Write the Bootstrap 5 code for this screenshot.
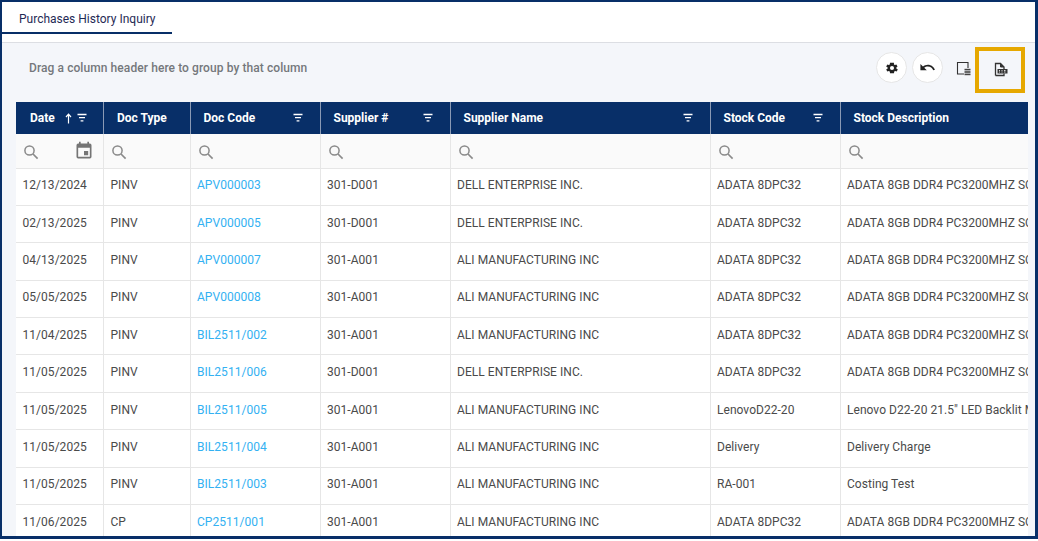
<!DOCTYPE html>
<html lang="en">
<head>
<meta charset="utf-8">
<title>Purchases History Inquiry</title>
<link rel="stylesheet" href="https://cdn.jsdelivr.net/npm/bootstrap@5.3.0/dist/css/bootstrap.min.css">
<style>
html,body{height:100%;overflow:hidden;background:#fff}
body{font-family:Roboto,"Liberation Sans",sans-serif;font-size:12px;color:#333}
.frame{width:1038px;height:539px;border:2px solid #082f68;border-bottom-width:3px;border-right-width:3px;overflow:hidden;background:#f4f6fa}
.tabbar{height:41px;background:#fff;border-bottom:1px solid #dcdee3}
.tabitem{width:170px;height:32px;border-bottom:2px solid #082f68;padding-left:17px;padding-top:10px;font-size:12px;color:#1f2a55;line-height:14px}
.toolarea{height:59px;padding-left:27px;padding-right:10px}
.hint{color:#75787c;font-size:12px;font-weight:500;margin-top:-9px;letter-spacing:.08px}
.toolgroup{margin-top:4px}
.roundbtn{width:31px;height:31px;border:1px solid #e6e6e6;border-radius:50%;background:#fff;padding:0;margin-top:5px;margin-right:5px}
.plainbtn{width:15px;height:15px;padding:0;margin-top:14px;margin-left:8px;margin-right:4px;background:transparent;border:0}
.hilite{width:50px;height:46px;border:4px solid #e6a800;padding-bottom:2px}
.gridwrap{margin-left:14px;width:1012px;overflow:hidden;background:#fff}
.datagrid{table-layout:fixed;width:1040px;margin:0;border-collapse:collapse;font-size:12px}
.datagrid th{height:32px;background:#082f68;color:#fff;font-weight:700;padding:0 16px 0 13px;border-right:1px solid #8a9ab5;white-space:nowrap;vertical-align:middle}
.datagrid th.c-date{padding-left:14px;padding-right:15px}
.datagrid .filter td{height:34px;background:#fafafa;padding:0 7px;border-bottom:1px solid #e6e6e6;border-right:1px solid #e6e6e6}
.datagrid .item td{height:37.4px;padding:0 6.5px 3px;border-bottom:1px solid #e6e6e6;border-right:1px solid #e6e6e6;color:#4a4a4a;white-space:nowrap;overflow:hidden;background:#fff;vertical-align:middle;letter-spacing:.04px}
.datagrid a{color:#33b1f2;text-decoration:none}
.ficon{width:12px;height:12px;flex:none}
.srch{width:16px;height:16px;margin-top:2px;display:block}
.datagrid .filter td.c-date-filter{padding-right:9px}
</style>
</head>
<body>
<svg width="0" height="0" class="d-block position-absolute">
<defs>
<symbol id="fl" viewBox="0 0 12 12"><path d="M1.500 2.500h9M3 5.700h6M4.600 8.900h2.800" stroke="#fff" stroke-width="1.300" fill="none"/></symbol>
<symbol id="sr" viewBox="0 0 16 16"><circle cx="6.500" cy="6.500" r="4.600" stroke="#8a8a8a" stroke-width="1.500" fill="none"/><path d="M10 10l4.600 4.600" stroke="#8a8a8a" stroke-width="1.700"/></symbol>
</defs>
</svg>
<div class="frame d-flex flex-column">
  <div class="tabbar flex-shrink-0"><div class="tabitem">Purchases History Inquiry</div></div>
  <div class="toolarea d-flex align-items-center justify-content-between flex-shrink-0">
    <div class="hint">Drag a column header here to group by that column</div>
    <div class="toolgroup d-flex align-items-start align-self-start">
      <button class="roundbtn d-flex align-items-center justify-content-center" aria-label="Settings"><svg width="14" height="14" viewBox="0 0 24 24"><path fill="#222" d="M19.400 13a7.500 7.500 0 0 0 0-2l2.100-1.600-2-3.500-2.500 1a7.500 7.500 0 0 0-1.700-1L15.400 2.900h-6.800L8.200 5.900a7.500 7.500 0 0 0-1.700 1l-2.500-1-2 3.500L4.600 11a7.500 7.500 0 0 0 0 2l-2.600 1.600 2 3.500 2.500-1a7.500 7.500 0 0 0 1.700 1l.4 3h6.800l.4-3a7.500 7.500 0 0 0 1.700-1l2.500 1 2-3.500zM12 15.500a3.500 3.500 0 1 1 0-7 3.500 3.500 0 0 1 0 7z"/></svg></button>
      <button class="roundbtn d-flex align-items-center justify-content-center" aria-label="Reset"><svg width="17" height="17" viewBox="0 0 24 24"><path fill="#222" d="M12.500 8c-2.650 0-5.050 1-6.900 2.600L2 7v9h9l-3.620-3.620c1.390-1.160 3.160-1.880 5.120-1.880 3.540 0 6.550 2.310 7.600 5.500l2.370-.78C21.080 11.030 17.150 8 12.500 8z"/></svg></button>
      <button class="plainbtn d-flex align-items-center justify-content-center" aria-label="Column chooser"><svg width="15" height="15" viewBox="0 0 15 15"><path d="M8 13H1.500V1.500h10.500V7" fill="none" stroke="#333" stroke-width="1.100"/><rect x="8.500" y="7.800" width="6" height="1.600" fill="#444"/><rect x="8.500" y="10.200" width="6" height="1.600" fill="#444"/><rect x="8.500" y="12.600" width="6" height="1.600" fill="#444"/></svg></button>
      <div class="hilite d-flex align-items-center justify-content-center"><svg width="15" height="15" viewBox="0 0 15 15"><path d="M2.500 13.500V1.500h5l3.500 3.500v2" fill="none" stroke="#333" stroke-width="1.300"/><path d="M7.500 1.500v3.500h3.500" fill="#333" stroke="#333"/><rect x="4.500" y="7" width="10" height="4.500" fill="#333"/><path d="M2.500 13.500h8.500v-2" fill="none" stroke="#333" stroke-width="1.300"/><path d="M6 8.500h1M8.500 8.500h1M11 8.500h1.500M6 10h1M8.500 10h1M11 10h1.500" stroke="#fff" stroke-width=".8"/></svg></div>
    </div>
  </div>
  <div class="gridwrap flex-grow-1">
    <table class="datagrid">
      <colgroup><col style="width:87.500px"><col style="width:86.500px"><col style="width:130px"><col style="width:130px"><col style="width:260px"><col style="width:130px"><col style="width:216px"></colgroup>
      <thead>
        <tr>
          <th class="c-date"><div class="d-flex align-items-center"><span class="flex-grow-1">Date</span><svg width="7" height="11" viewBox="0 0 7 11" class="me-1"><path d="M3.500 10.500V1.500M1 4l2.500-2.800L6 4" stroke="#fff" stroke-width="1.200" fill="none"/></svg><svg class="ficon"><use href="#fl"/></svg></div></th>
          <th><span>Doc Type</span></th>
          <th><div class="d-flex align-items-center justify-content-between"><span>Doc Code</span><svg class="ficon"><use href="#fl"/></svg></div></th>
          <th><div class="d-flex align-items-center justify-content-between"><span>Supplier #</span><svg class="ficon"><use href="#fl"/></svg></div></th>
          <th><div class="d-flex align-items-center justify-content-between"><span>Supplier Name</span><svg class="ficon"><use href="#fl"/></svg></div></th>
          <th><div class="d-flex align-items-center justify-content-between"><span>Stock Code</span><svg class="ficon"><use href="#fl"/></svg></div></th>
          <th><span>Stock Description</span></th>
        </tr>
      </thead>
      <tbody>
        <tr class="filter">
          <td class="c-date-filter"><div class="d-flex align-items-center justify-content-between"><svg class="srch"><use href="#sr"/></svg><svg width="20" height="20" viewBox="0 0 24 24"><path fill="#757575" d="M19 3h-1V1h-2v2H8V1H6v2H5a2 2 0 0 0-2 2v14a2 2 0 0 0 2 2h14a2 2 0 0 0 2-2V5a2 2 0 0 0-2-2zm0 16H5V8h14zM12 12h5v5h-5z"/></svg></div></td>
          <td><svg class="srch"><use href="#sr"/></svg></td>
          <td><svg class="srch"><use href="#sr"/></svg></td>
          <td><svg class="srch"><use href="#sr"/></svg></td>
          <td><svg class="srch"><use href="#sr"/></svg></td>
          <td><svg class="srch"><use href="#sr"/></svg></td>
          <td><svg class="srch"><use href="#sr"/></svg></td>
        </tr>
        <tr class="item"><td>12/13/2024</td><td>PINV</td><td><a href="#">APV000003</a></td><td>301-D001</td><td>DELL ENTERPRISE INC.</td><td>ADATA 8DPC32</td><td>ADATA 8GB DDR4 PC3200MHZ SO-DIMM</td></tr>
        <tr class="item"><td>02/13/2025</td><td>PINV</td><td><a href="#">APV000005</a></td><td>301-D001</td><td>DELL ENTERPRISE INC.</td><td>ADATA 8DPC32</td><td>ADATA 8GB DDR4 PC3200MHZ SO-DIMM</td></tr>
        <tr class="item"><td>04/13/2025</td><td>PINV</td><td><a href="#">APV000007</a></td><td>301-A001</td><td>ALI MANUFACTURING INC</td><td>ADATA 8DPC32</td><td>ADATA 8GB DDR4 PC3200MHZ SO-DIMM</td></tr>
        <tr class="item"><td>05/05/2025</td><td>PINV</td><td><a href="#">APV000008</a></td><td>301-A001</td><td>ALI MANUFACTURING INC</td><td>ADATA 8DPC32</td><td>ADATA 8GB DDR4 PC3200MHZ SO-DIMM</td></tr>
        <tr class="item"><td>11/04/2025</td><td>PINV</td><td><a href="#">BIL2511/002</a></td><td>301-A001</td><td>ALI MANUFACTURING INC</td><td>ADATA 8DPC32</td><td>ADATA 8GB DDR4 PC3200MHZ SO-DIMM</td></tr>
        <tr class="item"><td>11/05/2025</td><td>PINV</td><td><a href="#">BIL2511/006</a></td><td>301-D001</td><td>DELL ENTERPRISE INC.</td><td>ADATA 8DPC32</td><td>ADATA 8GB DDR4 PC3200MHZ SO-DIMM</td></tr>
        <tr class="item"><td>11/05/2025</td><td>PINV</td><td><a href="#">BIL2511/005</a></td><td>301-A001</td><td>ALI MANUFACTURING INC</td><td>LenovoD22-20</td><td>Lenovo D22-20 21.5" LED Backlit Monitor</td></tr>
        <tr class="item"><td>11/05/2025</td><td>PINV</td><td><a href="#">BIL2511/004</a></td><td>301-A001</td><td>ALI MANUFACTURING INC</td><td>Delivery</td><td>Delivery Charge</td></tr>
        <tr class="item"><td>11/05/2025</td><td>PINV</td><td><a href="#">BIL2511/003</a></td><td>301-A001</td><td>ALI MANUFACTURING INC</td><td>RA-001</td><td>Costing Test</td></tr>
        <tr class="item"><td>11/06/2025</td><td>CP</td><td><a href="#">CP2511/001</a></td><td>301-A001</td><td>ALI MANUFACTURING INC</td><td>ADATA 8DPC32</td><td>ADATA 8GB DDR4 PC3200MHZ SO-DIMM</td></tr>
      </tbody>
    </table>
  </div>
</div>
<script src="https://cdn.jsdelivr.net/npm/bootstrap@5.3.0/dist/js/bootstrap.bundle.min.js"></script>
</body>
</html>
